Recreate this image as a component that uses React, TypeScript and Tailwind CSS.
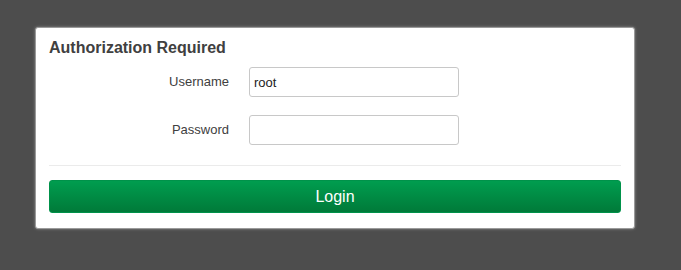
const fields = [
  { label: "Username", type: "text", value: "root" },
  { label: "Password", type: "password", value: "" },
];

export default function App() {
  return (
    <div className="min-h-[270px] bg-[#4d4d4d] pl-[35px] pt-[27px] font-['Liberation_Sans',Arial,sans-serif]">
      <div className="w-[600px] rounded-[3px] border border-[#9a9a9a] bg-white px-[13px] pb-[15px] pt-[10px] shadow-[0_0_3px_rgba(255,255,255,0.35)]">
        <h3 className="text-[16px] font-bold leading-[20px] text-[#404040]">
          Authorization Required
        </h3>

        <div className="mt-[9px] flex flex-col gap-[18px]">
          {fields.map((f) => (
            <div key={f.label} className="flex items-center gap-[20px]">
              <label className="w-[180px] text-right text-[13px] text-[#404040]">
                {f.label}
              </label>
              <input
                type={f.type}
                defaultValue={f.value}
                className="h-[30px] w-[210px] rounded-[3px] border border-[#c8c8c8] bg-white px-[4px] text-[13px] text-[#222] outline-none"
              />
            </div>
          ))}
        </div>

        <div className="mt-[20px] border-t border-[#ebebeb]" />

        <button className="mt-[14px] h-[33px] w-full rounded-[3px] border border-[#00924a] bg-gradient-to-b from-[#009d4f] to-[#007a39] text-[16px] text-white">
          Login
        </button>
      </div>
    </div>
  );
}
